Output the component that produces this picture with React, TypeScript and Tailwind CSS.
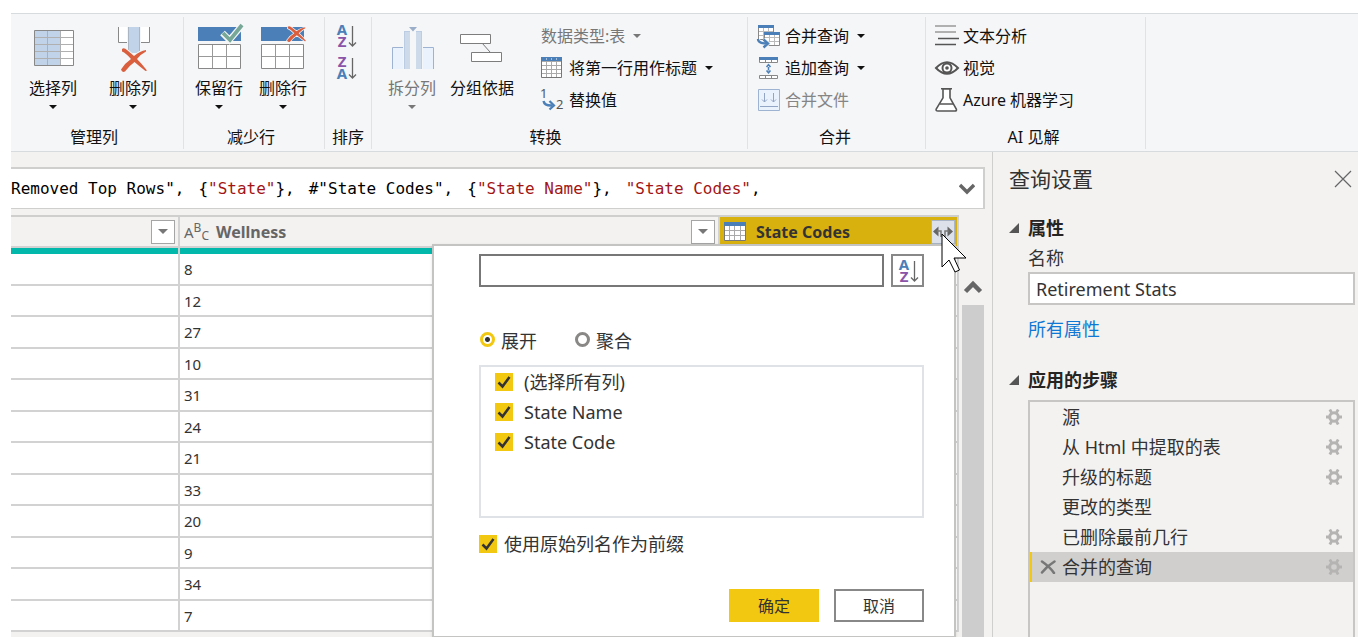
import { useState, type ReactNode } from "react";

const steps = [
  { name: "源", gear: true },
  { name: "从 Html 中提取的表", gear: true },
  { name: "升级的标题", gear: true },
  { name: "更改的类型", gear: false },
  { name: "已删除最前几行", gear: true },
  { name: "合并的查询", gear: true },
];

const wellness = [8, 12, 27, 10, 31, 24, 21, 33, 20, 9, 34, 7];

function Caret() {
  return (
    <svg viewBox="0 0 8 4" className="h-1 w-2 shrink-0" fill="currentColor" aria-hidden="true">
      <path d="M0 0h8L4 4z" />
    </svg>
  );
}

function BigIcon({ children }: { children: ReactNode }) {
  return (
    <svg viewBox="0 0 48 48" className="size-12 overflow-visible" fill="none" aria-hidden="true">
      {children}
    </svg>
  );
}

function SmallIcon({ children }: { children: ReactNode }) {
  return (
    <svg viewBox="0 0 24 24" className="size-6 shrink-0 overflow-visible" fill="none" aria-hidden="true">
      {children}
    </svg>
  );
}

function RibbonGroup({ className, label, labelClass = "", children }: { className: string; label: string; labelClass?: string; children: ReactNode }) {
  return (
    <section className={`flex shrink-0 flex-col border-r border-[#e1e2e4] ${className}`}>
      <div className="flex flex-1">{children}</div>
      <h2 className={`text-center leading-6 ${labelClass}`}>{label}</h2>
    </section>
  );
}

function BigButton({ label, className, caret = true, icon }: { label: string; className: string; caret?: boolean; icon: ReactNode }) {
  return (
    <button className={`flex flex-col items-center pt-2 ${className}`}>
      <BigIcon>{icon}</BigIcon>
      <span className="mt-[3px] mb-[5px] leading-6 whitespace-nowrap">{label}</span>
      {caret && <Caret />}
    </button>
  );
}

function RowButton({ label, icon, caret = false, className = "" }: { label: string; icon?: ReactNode; caret?: boolean; className?: string }) {
  return (
    <button className={`flex h-8 items-center gap-1 whitespace-nowrap ${className}`}>
      {icon && <SmallIcon>{icon}</SmallIcon>}
      <span>{label}</span>
      {caret && <span className="ml-1"><Caret /></span>}
    </button>
  );
}

function SortIcon({ first, second }: { first: "A" | "Z"; second: "A" | "Z" }) {
  const tone = { A: "fill-[#4a7fb8]", Z: "fill-[#8a55a8]" };
  return (
    <svg viewBox="0 0 20 24" className="h-6 w-5 overflow-visible text-[15px] font-bold" aria-hidden="true">
      <text x="5" y="11" textAnchor="middle" className={tone[first]}>{first}</text>
      <text x="5" y="23" textAnchor="middle" className={tone[second]}>{second}</text>
      <path d="M15.500 2v20M12 18.500l3.500 3.500 3.500-3.500" fill="none" stroke="#666" strokeWidth="1.300" />
    </svg>
  );
}

function RedCross({ x, y, w, h }: { x: number; y: number; w: number; h: number }) {
  return (
    <svg x={x} y={y} width={w} height={h} viewBox="0 0 26 24" preserveAspectRatio="none" overflow="visible">
      <path
        d="M1 1Q3-1 6 2L13 8Q19 3 25 2V3.500Q20 6 16 11Q21 16 26 22.500L24.500 23Q18 18 13.500 14Q8 18 4 23.500Q1 25 0 21.500Q4 15 10 11Q5 5 1 3.500Z"
        fill="#d95f3f"
        stroke="#f5f6f8"
        strokeWidth="2"
        paintOrder="stroke"
      />
    </svg>
  );
}

function RowsGrid({ x }: { x: number }) {
  return (
    <g>
      <path d={`M${x} 2h43v14h-43z`} fill="#4a7fb8" />
      <path d={`M${x + 0.5} 19.500h42v24h-42z`} fill="#fff" stroke="#888" />
      <path d={`M${x + 14.5} 20v23M${x + 28.5} 20v23M${x + 1} 31.500h41`} stroke="#999" />
    </g>
  );
}

function Gear() {
  return (
    <svg viewBox="0 0 16 16" className="size-4" fill="none" stroke="#b5b4b3" aria-hidden="true">
      <circle cx="8" cy="8" r="4.300" strokeWidth="3" />
      <path d="M0 8h3M13 8h3M3.800.500l1.700 3M12.200.500l-1.700 3M3.800 15.500l1.700-3M12.200 15.500l-1.700-3" strokeWidth="2.800" />
    </svg>
  );
}

function CheckBox({ label, className }: { label: string; className: string }) {
  const [on, setOn] = useState(true);
  return (
    <label className={`flex h-[30px] items-center text-lg ${className}`}>
      <span className="relative block size-[18px] shrink-0">
        <input
          type="checkbox"
          checked={on}
          onChange={() => setOn(!on)}
          className="block size-[18px] appearance-none border border-[#777] bg-white checked:border-[#f2c811] checked:bg-[#f2c811]"
        />
        {on && (
          <svg viewBox="0 0 18 18" className="pointer-events-none absolute inset-0" fill="none" aria-hidden="true">
            <path d="M3.500 9.500l4 4L14.500 4" stroke="#333" strokeWidth="2.500" />
          </svg>
        )}
      </span>
      <span>{label}</span>
    </label>
  );
}

function RadioOption({ label, checked, onChange }: { label: string; checked: boolean; onChange: () => void }) {
  return (
    <label className="flex items-center gap-[6px]">
      <input
        type="radio"
        name="mode"
        checked={checked}
        onChange={onChange}
        className="mb-[3px] size-[15px] appearance-none rounded-full border-[3px] border-[#8a8886] bg-white checked:border-[#f2c811] checked:bg-[radial-gradient(circle,#333_2px,#fff_3px)]"
      />
      <span>{label}</span>
    </label>
  );
}

function FilterButton({ label }: { label: string }) {
  return (
    <button aria-label={label} className="flex size-6 items-center justify-center border border-[#a5a5a5] bg-white text-[#777]">
      <svg viewBox="0 0 10 5" className="h-[5px] w-[10px]" fill="currentColor"><path d="M0 0h10L5 5z" /></svg>
    </button>
  );
}

function Ribbon() {
  return (
    <header className="mt-[13px] ml-[11px] flex h-[139px] shrink-0 overflow-hidden border-y border-[#d8dbde] bg-[#f5f6f8] pt-[3px] pb-[2px] text-base text-[#111]">
      <RibbonGroup className="w-[173px]" label="管理列" labelClass="pr-[6px]">
        <BigButton
          label="选择列"
          className="ml-[2px] w-20"
          icon={
            <>
              <path d="M5.500 5.500h39v35h-39z" fill="#fff" />
              <path d="M5.500 5.500h26v35h-26z" fill="#c0d3e8" />
              <path d="M6 12.500h38M6 19.500h38M6 26.500h38M6 33.500h38M18.500 6v34M31.500 6v34" stroke="#b0b0b0" />
              <path d="M5.500 5.500h39v35h-39z" stroke="#888" />
            </>
          }
        />
        <BigButton
          label="删除列"
          className="w-20"
          icon={
            <>
              <path d="M9.500 2v15.500H18V2M40.500 2v15.500H32V2" fill="#fff" />
              <path d="M9.500 2v15.500H18M40.500 2v15.500H32" stroke="#888" />
              <path d="M19 2h12v26H19z" fill="#c0d3e8" />
              <path d="M19.500 2v25M30.500 2v25" stroke="#aab6c4" />
              <RedCross x={12} y={23} w={26} h={24} />
            </>
          }
        />
      </RibbonGroup>
      <RibbonGroup className="w-[141px]" label="减少行" labelClass="pr-[6px]">
        <BigButton
          label="保留行"
          className="ml-[3px] w-16"
          icon={
            <>
              <RowsGrid x={3} />
              <path d="M27.500 8l7 7L47 .500" stroke="#f5f6f8" strokeWidth="6.500" />
              <path d="M28 8l7 7L47 0" stroke="#76a797" strokeWidth="3.800" />
            </>
          }
        />
        <BigButton label="删除行" className="w-16" icon={<><RowsGrid x={2} /><RedCross x={28} y={1} w={19} h={16} /></>} />
      </RibbonGroup>
      <RibbonGroup className="w-[47px]" label="排序">
        <div className="flex flex-col gap-2 pt-[7px] pl-3">
          <button aria-label="升序排序"><SortIcon first="A" second="Z" /></button>
          <button aria-label="降序排序"><SortIcon first="Z" second="A" /></button>
        </div>
      </RibbonGroup>
      <RibbonGroup className="w-[376px]" label="转换" labelClass="pr-7">
        <BigButton
          label="拆分列"
          className="ml-[5px] w-[70px] text-[#777]"
          icon={
            <>
              <path d="M4.500 44V22.500H15V44zM35 44V22.500h10.500V44z" fill="#eaf2fd" />
              <path d="M4.500 44V22.500H15M45.500 44V22.500H35" stroke="#9eb2d2" />
              <path d="M16 6h6v38h-6zM28 6h6v38h-6z" fill="#cddaea" />
              <path d="M16 6.500h6M28 6.500h6M16.500 6v38M33.500 6v38" stroke="#bccce2" />
              <path d="M21 2h8l-4 4.500z" fill="#9aaec9" />
            </>
          }
        />
        <BigButton
          label="分组依据"
          className="w-[70px]"
          caret={false}
          icon={
            <>
              <path d="M24 18l8 9" stroke="#777" />
              <path d="M2.500 9.500h30v9h-30zM13.500 27.500h30v9h-30z" fill="#fff" stroke="#7d7d7d" />
            </>
          }
        />
        <div className="flex flex-col pt-[3px] pl-6">
          <RowButton label="数据类型:表" caret className="text-[#777]" />
          <RowButton
            label="将第一行用作标题"
            caret
            icon={
              <>
                <path d="M.5 1.500h20v20H.500z" fill="#fff" />
                <path d="M.5 5.500h20M.5 9.500h20M.5 13.500h20M.5 17.500h20M5.500 5v16M10.500 5v16M15.500 5v16" stroke="#aaa" />
                <path d="M.5 1.500h20v20H.500z" stroke="#777" />
                <path d="M0 1h21v4H0z" fill="#4a7fb8" />
                <path d="M5.500 2v2M10.500 2v2M15.500 2v2" stroke="#a5c0dc" />
              </>
            }
          />
          <RowButton
            label="替换值"
            icon={
              <>
                <text x="-1" y="10" fill="#555" fontSize="13">1</text>
                <text x="15" y="21" fill="#555" fontSize="13">2</text>
                <path d="M2.500 13q1 5 9 4.500" stroke="#4a7fb8" strokeWidth="2.400" />
                <path d="M8.500 13l4.500 4.500-4.500 4" stroke="#4a7fb8" strokeWidth="2.200" />
              </>
            }
          />
        </div>
      </RibbonGroup>
      <RibbonGroup className="w-[178px]" label="合并" labelClass="pr-[3px]">
        <div className="flex flex-col pt-[3px] pl-[9px]">
          <RowButton
            label="合并查询"
            caret
            icon={
              <>
                <path d="M1.500 2.500h15v13h-15z" fill="#fff" stroke="#888" />
                <path d="M2 7.500h14M2 11.500h14M6.500 4v12M11.500 4v12" stroke="#bbb" />
                <path d="M1 1h16v3H1z" fill="#4a7fb8" />
                <path d="M7.500 9.500h15v12h-15z" fill="#fff" stroke="#888" />
                <path d="M8 13.500h14M8 17.500h14M12.500 11v10M17.500 11v10" stroke="#bbb" />
                <path d="M7 8h16v3H7z" fill="#4a7fb8" />
                <path d="M1 15q0 4.500 9 4.500M6.500 15.500l4.500 4-4.500 4" stroke="#f5f6f8" strokeWidth="4" />
                <path d="M1 15q0 4.500 9 4.500M6.500 15.500l4.500 4-4.500 4" stroke="#4a7fb8" strokeWidth="2.400" />
              </>
            }
          />
          <RowButton
            label="追加查询"
            caret
            icon={
              <>
                <path d="M2.500 2.500h18v4h-18zM2.500 19.500h18v3h-18z" fill="#fff" stroke="#888" />
                <path d="M8.500 4v2M14.500 4v2M8.500 20v2M14.500 20v2" stroke="#888" />
                <path d="M2 1h19v3H2z" fill="#4a7fb8" />
                <path d="M9.500 11l2-2.300 2 2.300M9.500 14.500l2 2.300 2-2.300M11.500 11v3.500" stroke="#4a7fb8" strokeWidth="1.500" />
              </>
            }
          />
          <RowButton
            label="合并文件"
            className="text-[#858585]"
            icon={
              <>
                <path d="M1.500 1.500h21v21h-21z" fill="#eaf2fd" stroke="#9eb2d2" />
                <path d="M3 18.500h18M7.500 5v9M16.500 5v9M5 11.500l2.500 2.500 2.500-2.500M14 11.500l2.500 2.500 2.500-2.500" stroke="#92a5c4" />
              </>
            }
          />
        </div>
      </RibbonGroup>
      <RibbonGroup className="w-[220px]" label="AI 见解" labelClass="pr-1">
        <div className="flex flex-col pt-[3px] pl-[9px]">
          <RowButton label="文本分析" icon={<><path d="M0 2h21M0 8h21" stroke="#999" strokeWidth="1.600" /><path d="M3 14.500h21M0 20.500h21" stroke="#555" strokeWidth="1.300" /></>} />
          <RowButton
            label="视觉"
            icon={
              <>
                <path d="M1 12q11-11.500 22 0q-11 11.500-22 0z" fill="#fff" stroke="#555" strokeWidth="2" />
                <circle cx="12" cy="12" r="4.500" stroke="#555" strokeWidth="2" />
                <circle cx="12" cy="12" r="1.800" fill="#555" />
              </>
            }
          />
          <RowButton
            label="Azure 机器学习"
            icon={
              <>
                <path d="M8 .800v9L1.200 21Q.500 23 3 23h17q2 0 1.300-2L15 9.800v-9z" fill="#fff" stroke="#555" strokeWidth="1.600" />
                <path d="M6 .800h11M5 16h13" stroke="#555" strokeWidth="1.500" />
              </>
            }
          />
        </div>
      </RibbonGroup>
    </header>
  );
}

function FormulaBar() {
  return (
    <div className="mt-[15px] mr-[7px] flex h-[42px] shrink-0 items-center justify-between border-t-2 border-r-2 border-b border-[#cfcfce] bg-white pr-2">
      <code className="flex gap-[14px] font-['DejaVu_Sans_Mono',monospace] text-base whitespace-pre text-black">
        <span>Removed Top Rows",</span>
        <span>{"{"}<span className="text-[#a31515]">"State"</span>{"},"}</span>
        <span>#"State Codes",</span>
        <span>{"{"}<span className="text-[#a31515]">"State Name"</span>{"},"}</span>
        <span><span className="text-[#a31515]">"State Codes"</span>,</span>
      </code>
      <button aria-label="展开编辑栏">
        <svg viewBox="0 0 16 12" className="h-3 w-4" fill="none"><path d="M1 2l7 7 7-7" stroke="#666" strokeWidth="3.400" /></svg>
      </button>
    </div>
  );
}

function DataTable() {
  const cell = "border-r-2 border-b-2 border-[#d2d2d2] bg-white";
  const head = "h-[31px] border-r-2 border-b-2 border-[#d2d2d2] p-0 text-left text-base font-bold";
  return (
    <table className="w-full table-fixed border-separate border-spacing-0 border-t-2 border-[#cfcfce]">
      <colgroup>
        <col className="w-[169px]" />
        <col />
        <col className="w-[239px]" />
      </colgroup>
      <thead>
        <tr>
          <th className={head}>
            <div className="flex justify-end pr-[3px]"><FilterButton label="筛选" /></div>
          </th>
          <th className={head}>
            <div className="flex items-center pr-[3px] pl-1 text-[#666]">
              <span className="flex w-8 items-center font-normal" aria-hidden="true">
                <span className="text-[15px] leading-5">A</span>
                <span className="pb-2 text-xs leading-3">B</span>
                <span className="pt-2 text-xs leading-3">C</span>
              </span>
              <span className="flex-1">Wellness</span>
              <FilterButton label="筛选 Wellness" />
            </div>
          </th>
          <th className={`${head} bg-[#d8b10f]`}>
            <div className="flex items-center pr-[2px] pl-1 text-[#333]">
              <svg viewBox="0 0 22 19" className="h-[19px] w-[22px]" fill="none" aria-hidden="true">
                <path d="M.5.500h21v18H.500z" fill="#fff" stroke="#777" />
                <path d="M1 8.500h20M1 13.500h20M5.500 4v14M10.500 4v14M16.500 4v14" stroke="#aaa" />
                <path d="M0 0h22v4H0z" fill="#4a7fb8" />
              </svg>
              <span className="flex-1 pl-[10px]">State Codes</span>
              <button aria-label="展开 State Codes" className="flex size-6 items-center justify-center border border-[#a9b4c6] bg-[#dde1ea]">
                <svg viewBox="0 0 20 12" className="h-3 w-5" fill="none">
                  <path d="M0 5.500L5.500.500v10zM20 5.500L14.500.500v10z" fill="#666" />
                  <path d="M4 5h4v6M16 5h-4v6" stroke="#777" strokeWidth="1.500" />
                </svg>
              </button>
            </div>
          </th>
        </tr>
        <tr aria-hidden="true">
          {[0, 1, 2].map((i) => (
            <td key={i} className="h-[6px] border-r-2 border-[#d2d2d2] bg-[#01b8aa] p-0" />
          ))}
        </tr>
      </thead>
      <tbody>
        {wellness.map((value) => (
          <tr key={value} className="odd:h-8 even:h-[31px]">
            <td className={`${cell} p-0`} />
            <td className={`${cell} py-0 pl-1 text-[15px] leading-5 text-[#333]`}>{value}</td>
            <td className={`${cell} p-0`} />
          </tr>
        ))}
      </tbody>
    </table>
  );
}

function ExpandMenu() {
  const [mode, setMode] = useState("expand");
  return (
    <form
      onSubmit={(e) => e.preventDefault()}
      className="absolute top-[29px] right-[3px] flex w-[524px] flex-col border-2 border-[#c4c4c3] bg-white pt-2 pr-[30px] pb-[14px] pl-[45px] text-lg text-[#333] shadow-sm"
    >
      <div className="flex gap-[7px]">
        <input type="text" aria-label="搜索列" className="h-[33px] min-w-0 flex-1 border-2 border-[#777] px-2 outline-none" />
        <button type="button" aria-label="排序" className="flex h-[33px] w-[33px] items-center justify-center border-2 border-[#888] pl-[2px]">
          <SortIcon first="A" second="Z" />
        </button>
      </div>
      <div className="mt-10 flex h-7 items-center gap-[38px] pl-px">
        <RadioOption label="展开" checked={mode === "expand"} onChange={() => setMode("expand")} />
        <RadioOption label="聚合" checked={mode === "aggregate"} onChange={() => setMode("aggregate")} />
      </div>
      <div className="mt-[10px] h-[153px] border-2 border-[#dfe3e7] pl-[14px]">
        <CheckBox label="(选择所有列)" className="gap-[11px]" />
        <CheckBox label="State Name" className="gap-[11px]" />
        <CheckBox label="State Code" className="gap-[11px]" />
      </div>
      <CheckBox label="使用原始列名作为前缀" className="mt-[11px] gap-[7px]" />
      <div className="mt-[30px] flex justify-end gap-[15px] text-base">
        <button type="submit" className="h-[33px] w-[90px] bg-[#f2c811]">确定</button>
        <button type="button" className="h-[33px] w-[90px] border-2 border-[#888]">取消</button>
      </div>
    </form>
  );
}

function SectionTitle({ children }: { children: ReactNode }) {
  return (
    <h3 className="flex h-[30px] items-center gap-[9px] text-lg font-bold text-[#252423]">
      <svg viewBox="0 0 10 10" className="size-[10px]" fill="#555" aria-hidden="true"><path d="M10 0v10H0z" /></svg>
      {children}
    </h3>
  );
}

function SettingsPanel() {
  const [current, setCurrent] = useState(5);
  return (
    <aside className="flex w-[366px] shrink-0 flex-col border-l border-[#cfcfce] pr-[3px] pl-4 text-lg text-[#333]">
      <div className="flex h-[54px] items-center justify-between pr-[3px]">
        <h2 className="text-[21px]">查询设置</h2>
        <button aria-label="关闭">
          <svg viewBox="0 0 18 18" className="size-[18px]" fill="none" stroke="#666" strokeWidth="1.200"><path d="M1 1l16 16M17 1L1 17" /></svg>
        </button>
      </div>
      <div className="pt-[7px]"><SectionTitle>属性</SectionTitle></div>
      <div className="flex flex-col pl-[19px]">
        <label htmlFor="query-name" className="leading-[30px]">名称</label>
        <input id="query-name" type="text" defaultValue="Retirement Stats" className="-mt-px h-[33px] border-2 border-[#c8c6c4] bg-white px-[6px] outline-none" />
        <a href="#properties" className="mt-[9px] self-start leading-[30px] text-[#0f78d4]">所有属性</a>
      </div>
      <div className="mt-[21px]"><SectionTitle>应用的步骤</SectionTitle></div>
      <ul className="mt-[5px] ml-[19px] flex-1 border-2 border-b-0 border-[#c8c6c4]">
        {steps.map((step, i) => (
          <li
            key={step.name}
            className={`flex h-[30px] items-center border-l-2 pr-[11px] ${i === current ? "border-[#f2c811] bg-[#d0cfce]" : "border-transparent"}`}
          >
            <span className="flex w-[30px] justify-end pr-[6px]">
              {i === current && (
                <button aria-label="删除步骤">
                  <svg viewBox="0 0 16 14" className="h-[14px] w-4" fill="none" stroke="#777" strokeLinecap="round" aria-hidden="true">
                    <path d="M2 1.500Q10 7 14 13" strokeWidth="2.500" /><path d="M14.500 1.500Q7 6 2 12.500" strokeWidth="2.500" />
                  </svg>
                </button>
              )}
            </span>
            <button onClick={() => setCurrent(i)} className="flex-1 text-left">{step.name}</button>
            {step.gear && <button aria-label={`${step.name} 设置`}><Gear /></button>}
          </li>
        ))}
      </ul>
    </aside>
  );
}

export default function App() {
  return (
    <div className="flex h-screen flex-col overflow-hidden bg-white font-['Noto_Sans','Noto_Sans_CJK_SC',sans-serif]">
      <Ribbon />
      <div className="ml-[11px] flex min-h-0 flex-1 bg-[#f3f2f1]">
        <main className="flex min-w-0 flex-1 flex-col">
          <FormulaBar />
          <div className="mt-[6px] flex min-h-0 flex-1 pr-2">
            <div className="relative min-w-0 flex-1">
              <div className="h-full overflow-hidden"><DataTable /></div>
              <ExpandMenu />
              <svg viewBox="0 0 26 40" className="pointer-events-none absolute top-[18px] -right-2 h-10 w-[26px]" aria-hidden="true">
                <path d="M1 1v33l7-7 6 12 4.500-2-5.500-12H25z" fill="#fff" stroke="#000" />
              </svg>
            </div>
            <div className="ml-[3px] flex w-[22px] flex-col pt-[62px]">
              <svg viewBox="0 0 22 18" className="h-[18px] w-[22px]" fill="none" aria-hidden="true">
                <path d="M3.500 14.500L11 7l7.500 7.500" stroke="#666" strokeWidth="4.500" />
              </svg>
              <div className="mt-[10px] flex-1 bg-[#cdcdcd]" />
            </div>
          </div>
        </main>
        <SettingsPanel />
      </div>
    </div>
  );
}
